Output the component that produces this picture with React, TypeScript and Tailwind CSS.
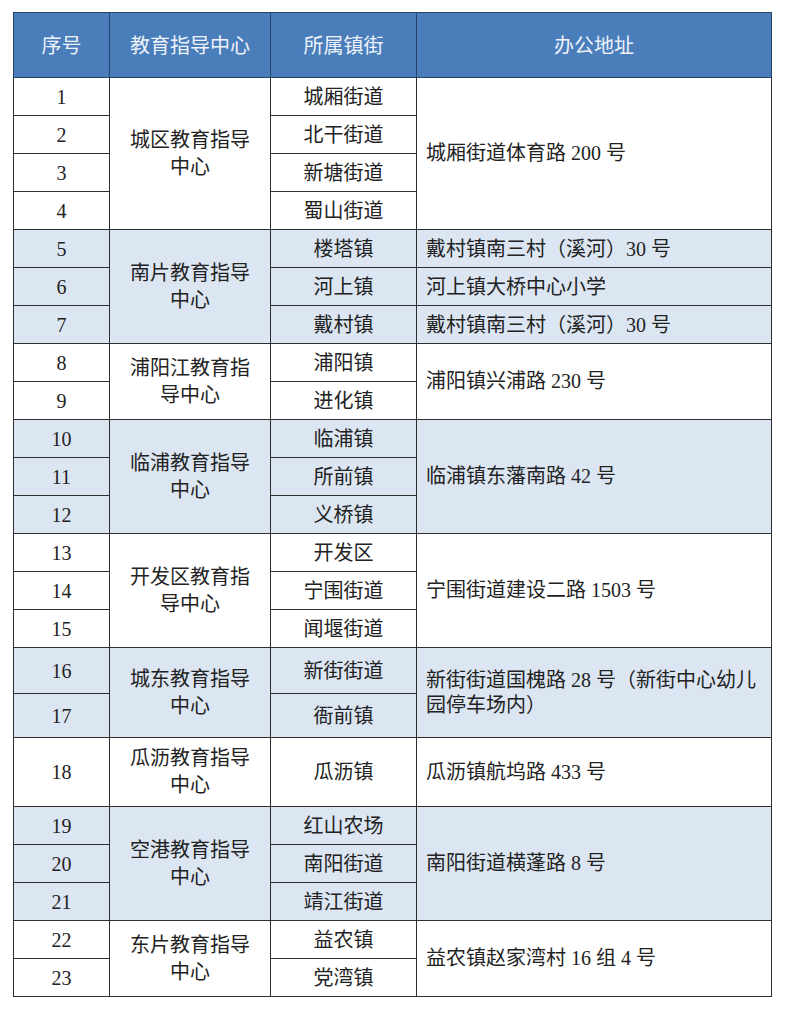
import React from 'react'

type Row = {
  no: number
  town: string
  address?: string
}

type Group = {
  center: string
  shaded: boolean
  address?: string // shared address for the whole group
  rows: Row[]
  heights: string[]
}

const groups: Group[] = [
  {
    center: '城区教育指导中心',
    shaded: false,
    address: '城厢街道体育路 200 号',
    rows: [
      { no: 1, town: '城厢街道' },
      { no: 2, town: '北干街道' },
      { no: 3, town: '新塘街道' },
      { no: 4, town: '蜀山街道' },
    ],
    heights: ['h-[38px]', 'h-[38px]', 'h-[38px]', 'h-[38px]'],
  },
  {
    center: '南片教育指导中心',
    shaded: true,
    rows: [
      { no: 5, town: '楼塔镇', address: '戴村镇南三村（溪河）30 号' },
      { no: 6, town: '河上镇', address: '河上镇大桥中心小学' },
      { no: 7, town: '戴村镇', address: '戴村镇南三村（溪河）30 号' },
    ],
    heights: ['h-[38px]', 'h-[38px]', 'h-[38px]'],
  },
  {
    center: '浦阳江教育指导中心',
    shaded: false,
    address: '浦阳镇兴浦路 230 号',
    rows: [
      { no: 8, town: '浦阳镇' },
      { no: 9, town: '进化镇' },
    ],
    heights: ['h-[38px]', 'h-[38px]'],
  },
  {
    center: '临浦教育指导中心',
    shaded: true,
    address: '临浦镇东藩南路 42 号',
    rows: [
      { no: 10, town: '临浦镇' },
      { no: 11, town: '所前镇' },
      { no: 12, town: '义桥镇' },
    ],
    heights: ['h-[38px]', 'h-[38px]', 'h-[38px]'],
  },
  {
    center: '开发区教育指导中心',
    shaded: false,
    address: '宁围街道建设二路 1503 号',
    rows: [
      { no: 13, town: '开发区' },
      { no: 14, town: '宁围街道' },
      { no: 15, town: '闻堰街道' },
    ],
    heights: ['h-[38px]', 'h-[38px]', 'h-[38px]'],
  },
  {
    center: '城东教育指导中心',
    shaded: true,
    address: '新街街道国槐路 28 号（新街中心幼儿园停车场内）',
    rows: [
      { no: 16, town: '新街街道' },
      { no: 17, town: '衙前镇' },
    ],
    heights: ['h-[46px]', 'h-[44px]'],
  },
  {
    center: '瓜沥教育指导中心',
    shaded: false,
    address: '瓜沥镇航坞路 433 号',
    rows: [{ no: 18, town: '瓜沥镇' }],
    heights: ['h-[69px]'],
  },
  {
    center: '空港教育指导中心',
    shaded: true,
    address: '南阳街道横蓬路 8 号',
    rows: [
      { no: 19, town: '红山农场' },
      { no: 20, town: '南阳街道' },
      { no: 21, town: '靖江街道' },
    ],
    heights: ['h-[38px]', 'h-[38px]', 'h-[38px]'],
  },
  {
    center: '东片教育指导中心',
    shaded: false,
    address: '益农镇赵家湾村 16 组 4 号',
    rows: [
      { no: 22, town: '益农镇' },
      { no: 23, town: '党湾镇' },
    ],
    heights: ['h-[38px]', 'h-[38px]'],
  },
]

const cell = 'border border-[#2e2e2e] p-0 align-middle'

export default function App() {
  return (
    <div
      className="min-h-screen bg-white pl-[13px] pt-[12px] text-[20px] text-[#222]"
      style={{ fontFamily: '"Liberation Serif", "Noto Sans CJK SC", serif' }}
    >
      <table className="w-[758px] table-fixed border-collapse">
        <colgroup>
          <col className="w-[96px]" />
          <col className="w-[161px]" />
          <col className="w-[146px]" />
          <col className="w-[355px]" />
        </colgroup>
        <thead>
          <tr className="h-[65px] bg-[#4a7ebb] text-[#eef3fa]">
            <th className="border border-[#24436b] font-normal" style={{ fontFamily: '"Noto Sans CJK SC", sans-serif' }}>
              序号
            </th>
            <th className="border border-[#24436b] font-normal" style={{ fontFamily: '"Noto Sans CJK SC", sans-serif' }}>
              教育指导中心
            </th>
            <th className="border border-[#24436b] font-normal" style={{ fontFamily: '"Noto Sans CJK SC", sans-serif' }}>
              所属镇街
            </th>
            <th className="border border-[#24436b] font-normal" style={{ fontFamily: '"Noto Sans CJK SC", sans-serif' }}>
              办公地址
            </th>
          </tr>
        </thead>
        <tbody>
          {groups.map((g) =>
            g.rows.map((r, i) => (
              <tr key={r.no} className={`${g.heights[i]} ${g.shaded ? 'bg-[#dce6f2]' : 'bg-white'}`}>
                <td className={`${cell} text-center`}>{r.no}</td>
                {i === 0 && (
                  <td rowSpan={g.rows.length} className={`${cell} text-center`}>
                    <div className="mx-auto w-[122px] leading-[27px]">{g.center}</div>
                  </td>
                )}
                <td className={`${cell} text-center`}>{r.town}</td>
                {g.address
                  ? i === 0 && (
                      <td rowSpan={g.rows.length} className={`${cell} pl-[9px] pr-[9px] leading-[25px]`}>
                        {g.address}
                      </td>
                    )
                  : (
                      <td className={`${cell} pl-[9px] pr-[9px]`}>{r.address}</td>
                    )}
              </tr>
            ))
          )}
        </tbody>
      </table>
    </div>
  )
}
